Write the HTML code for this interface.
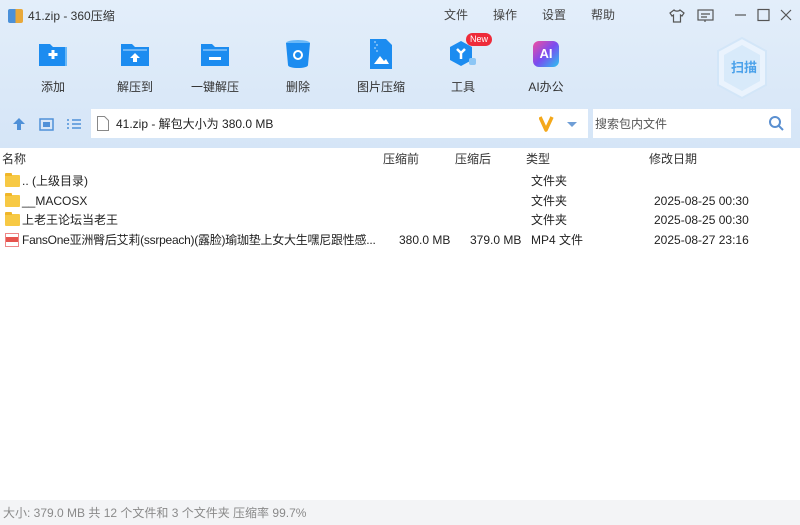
<!DOCTYPE html>
<html><head><meta charset="utf-8"><style>
*{margin:0;padding:0;box-sizing:border-box}
body{width:800px;height:525px;overflow:hidden;font-family:"Liberation Sans","Noto Sans CJK SC",sans-serif;font-size:12px;line-height:16px;color:#222;background:#fff;position:relative}
.top{position:absolute;left:0;top:0;width:800px;height:148px;background:linear-gradient(#e3eefa,#d5e5f7)}
.abs{position:absolute}
.menu span{position:absolute;top:7px;font-size:12px;color:#444}
.tb{position:absolute;top:38px;width:80px;text-align:center}
.tb .ic{width:32px;height:32px;margin:0 auto;position:relative}
.tb .lb{margin-top:9px;font-size:12px;color:#333}
.hdr span{position:absolute;top:151px;color:#333}
.row{position:absolute;left:0;width:800px;height:20px}
.row span{position:absolute;top:2px}
.fold{position:absolute;left:5px;top:4px;width:15px;height:12px;background:#f7c944;border-radius:1px}
.fold:before{content:"";position:absolute;left:0;top:-2px;width:7px;height:3px;background:#f0b62a;border-radius:1px 1px 0 0}
</style></head><body>
<div class="top"></div>
<div class="abs" style="left:8px;top:9px;width:15px;height:14px;background:linear-gradient(90deg,#4a90d9 50%,#e8a83a 50%);border-radius:2px"></div>
<div class="abs" style="left:28px;top:8px;font-size:12px;color:#333">41.zip - 360压缩</div>
<div class="menu"><span style="left:444px">文件</span><span style="left:493px">操作</span><span style="left:542px">设置</span><span style="left:591px">帮助</span></div>
<svg class="abs" style="left:668px;top:8px" width="18" height="16" viewBox="0 0 18 16" fill="none" stroke="#555" stroke-width="1.2"><path d="M6 2L2 5l2 3 1.5-1V14h7V7L14 8l2-3-4-3c-1 1.5-5 1.5-6 0z"/></svg>
<svg class="abs" style="left:697px;top:9px" width="17" height="14" viewBox="0 0 17 14" fill="none" stroke="#555" stroke-width="1.2"><rect x="1" y="1" width="15" height="10"/><path d="M4 5h9M4 8h6M8 11v2"/></svg>
<svg class="abs" style="left:734px;top:8px" width="58" height="14" viewBox="0 0 58 14" fill="none" stroke="#555" stroke-width="1.2"><path d="M1 7h11"/><rect x="24" y="1.5" width="11" height="11"/><path d="M47 2l10 10M57 2L47 12"/></svg>
<div class="tb" style="left:13px"><div class="ic"><svg width="32" height="32" viewBox="0 0 32 32"><path d="M2 6h11l3 3h14v19H2z" fill="#1c8cf0"/><rect x="28" y="9" width="2" height="19" fill="#6ab8f7"/><path d="M16 12v9M11.5 16.5h9" stroke="#fff" stroke-width="3"/></svg></div><div class="lb">添加</div></div>
<div class="tb" style="left:95px"><div class="ic"><svg width="32" height="32" viewBox="0 0 32 32"><path d="M2 6h11l3 3h14v19H2z" fill="#1c8cf0"/><path d="M4 12h24" stroke="#bfe0fb" stroke-width="1"/><path d="M16 15l-5 5h3v4h4v-4h3z" fill="#fff"/></svg></div><div class="lb">解压到</div></div>
<div class="tb" style="left:175px"><div class="ic"><svg width="32" height="32" viewBox="0 0 32 32"><path d="M2 6h11l3 3h14v19H2z" fill="#1c8cf0"/><path d="M4 12h24" stroke="#bfe0fb"/><rect x="10" y="19" width="12" height="3" fill="#fff"/></svg></div><div class="lb">一键解压</div></div>
<div class="tb" style="left:258px"><div class="ic"><svg width="32" height="32" viewBox="0 0 32 32"><ellipse cx="16" cy="5" rx="12" ry="3" fill="#6ab8f7"/><path d="M4 5h24l-2 22c0 2-5 3-10 3s-10-1-10-3z" fill="#1c8cf0"/><circle cx="16" cy="17" r="4" fill="none" stroke="#fff" stroke-width="2"/></svg></div><div class="lb">删除</div></div>
<div class="tb" style="left:341px"><div class="ic"><svg width="32" height="32" viewBox="0 0 32 32"><path d="M5 1h16l6 6v24H5z" fill="#1c8cf0"/><path d="M9 26l6-8 4 5 2-2 3 5z" fill="#fff"/><path d="M10 3v2M12 6v2M10 9v2M12 12v2" stroke="#bfe0fb"/></svg></div><div class="lb">图片压缩</div></div>
<div class="tb" style="left:423px"><div class="ic"><svg width="32" height="32" viewBox="0 0 32 32"><path d="M14 3l11 6v13l-11 6-11-6V9z" fill="#1c8cf0"/><rect x="22" y="20" width="7" height="7" rx="2" fill="#8cc6f5"/><path d="M10 11l4 4 4-4M14 15v6" stroke="#fff" stroke-width="2.5" fill="none"/></svg></div><div class="lb">工具</div></div>
<div class="abs" style="left:466px;top:33px;width:26px;height:13px;background:#ee2b3a;border-radius:7px;color:#fff;font-size:9px;text-align:center;line-height:13px">New</div>
<div class="tb" style="left:506px"><div class="ic"><div style="position:absolute;left:3px;top:3px;width:26px;height:26px;border-radius:6px;background:linear-gradient(135deg,#f24ea0,#7a4cf0 50%,#2ac4f0);color:#fff;font-weight:bold;font-size:13px;text-align:center;line-height:26px">AI</div></div><div class="lb">AI办公</div></div>
<svg class="abs" style="left:715px;top:36px" width="54" height="64" viewBox="0 0 54 64"><path d="M27 2l24 13v34L27 62 3 49V15z" fill="#eaf3fd" stroke="#d3e6f8" stroke-width="2"/><path d="M27 9l18 10v26L27 55 9 45V19z" fill="#d8eafa"/></svg>
<div class="abs" style="left:731px;top:60px;font-size:13px;font-weight:bold;color:#4aa1ea">扫描</div>
<svg class="abs" style="left:12px;top:117px" width="72" height="14" viewBox="0 0 72 14"><path d="M7 1l6 6H9v6H5V7H1z" fill="#4f90d8"/><rect x="28" y="2" width="13" height="11" fill="none" stroke="#4f90d8" stroke-width="1.5"/><rect x="31" y="5" width="7" height="5" fill="#4f90d8"/><path d="M55 3h2M55 7h2M55 11h2M60 3h9M60 7h9M60 11h9" stroke="#4f90d8" stroke-width="1.5"/></svg>
<div class="abs" style="left:91px;top:109px;width:497px;height:29px;background:#fff"></div>
<svg class="abs" style="left:97px;top:116px" width="12" height="15" viewBox="0 0 12 15"><path d="M.5.5h7l4 4v10H.5z" fill="#fff" stroke="#888"/></svg>
<div class="abs" style="left:116px;top:116px;font-size:12px">41.zip - 解包大小为 380.0 MB</div>
<svg class="abs" style="left:539px;top:116px" width="44" height="16" viewBox="0 0 44 16"><path d="M1 1l6 13 6-13" stroke="#f4a81a" stroke-width="3.5" fill="none" stroke-linejoin="round"/><path d="M28 6h10l-5 5z" fill="#6f9ed6"/></svg>
<div class="abs" style="left:593px;top:109px;width:198px;height:29px;background:#fff"></div>
<div class="abs" style="left:595px;top:116px;font-size:12px;color:#555">搜索包内文件</div>
<svg class="abs" style="left:768px;top:115px" width="16" height="16" viewBox="0 0 16 16" fill="none" stroke="#5a8fd0" stroke-width="2"><circle cx="7" cy="7" r="5"/><path d="M11 11l4 4"/></svg>
<div class="hdr"><span style="left:2px">名称</span><span style="left:383px">压缩前</span><span style="left:455px">压缩后</span><span style="left:526px">类型</span><span style="left:649px">修改日期</span></div>
<div class="row" style="top:171px"><div class="fold"></div><span style="left:22px">.. (上级目录)</span><span style="left:531px">文件夹</span></div>
<div class="row" style="top:191px"><div class="fold"></div><span style="left:22px">__MACOSX</span><span style="left:531px">文件夹</span><span style="left:654px">2025-08-25 00:30</span></div>
<div class="row" style="top:210px"><div class="fold"></div><span style="left:22px">上老王论坛当老王</span><span style="left:531px">文件夹</span><span style="left:654px">2025-08-25 00:30</span></div>
<div class="row" style="top:230px"><div style="position:absolute;left:5px;top:3px;width:14px;height:14px;background:#fff;border:1px solid #e88;"><div style="margin-top:3px;height:5px;background:#e6544e"></div></div><span style="left:22px;letter-spacing:-0.25px">FansOne亚洲臀后艾莉(ssrpeach)(露脸)瑜珈垫上女大生嘿尼跟性感...</span><span style="left:399px">380.0 MB</span><span style="left:470px">379.0 MB</span><span style="left:531px">MP4 文件</span><span style="left:654px">2025-08-27 23:16</span></div>
<div class="abs" style="left:0;top:500px;width:800px;height:25px;background:#f3f4f6"></div>
<div class="abs" style="left:3px;top:505px;font-size:12px;color:#8a8a8a">大小: 379.0 MB 共 12 个文件和 3 个文件夹 压缩率 99.7%</div>
</body></html>
